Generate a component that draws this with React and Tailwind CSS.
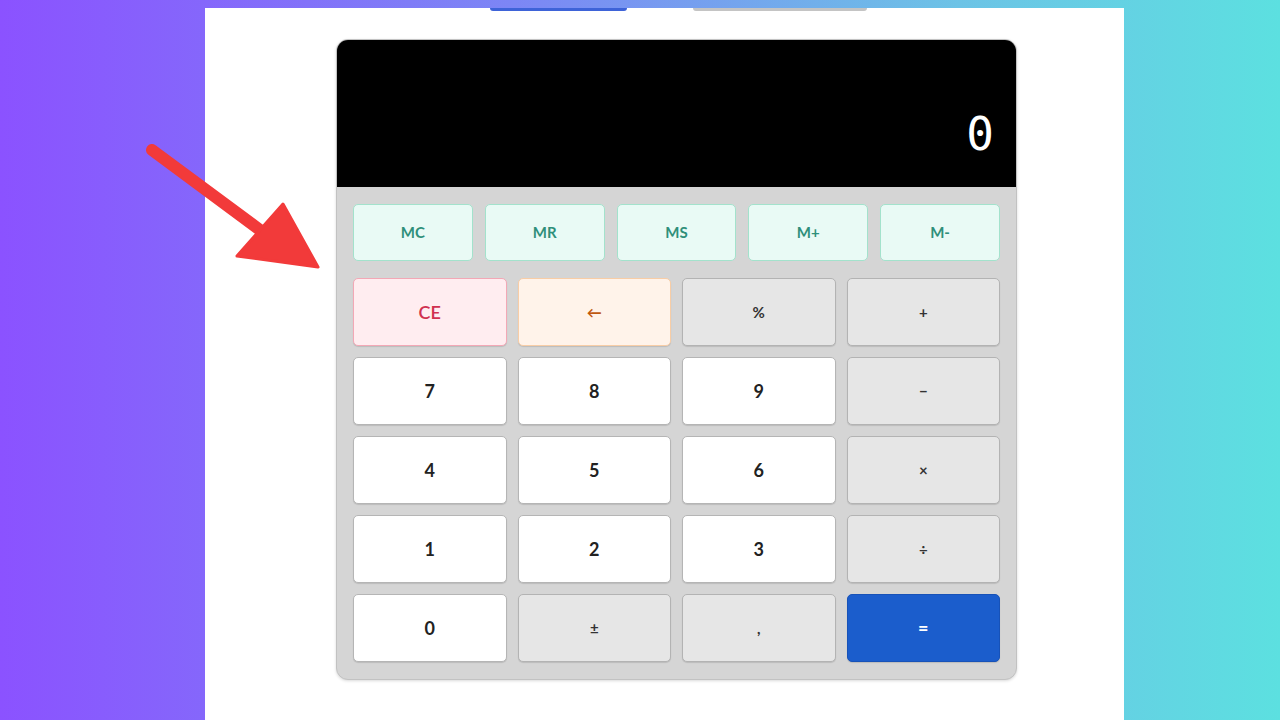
import React from "react";

const font = { fontFamily: '"Lato", "Open Sans", "Liberation Sans", sans-serif' };

function MemBtn({ label }) {
  return (
    <div className="flex h-[57px] flex-1 items-center justify-center rounded-[5px] border border-[#a3e2cc] bg-[#e9faf5] text-[15px] font-bold text-[#2f8f7a]">
      {label}
    </div>
  );
}

function Key({ label, cls }) {
  return (
    <div className={"flex h-[68px] items-center justify-center rounded-[5px] border font-bold shadow-[0_1px_1px_rgba(0,0,0,0.12)] " + cls}>
      {label}
    </div>
  );
}

const num = "bg-white border-[#b5b5b5] text-[#222] text-[18px]";
const op = "bg-[#e6e6e6] border-[#b3b3b3] text-[#333] text-[15px]";

export default function App() {
  const keys = [
    ["CE", "bg-[#ffedf0] border-[#f3a8b6] text-[#d0314f] text-[18px] font-semibold"],
    ["\u2190", "bg-[#fff3ea] border-[#f8cda6] text-[#c05810] text-[15px]"],
    ["%", op],
    ["+", op],
    ["7", num],
    ["8", num],
    ["9", num],
    ["\u2212", op],
    ["4", num],
    ["5", num],
    ["6", num],
    ["\u00d7", op],
    ["1", num],
    ["2", num],
    ["3", num],
    ["\u00f7", op],
    ["0", num],
    ["\u00b1", op],
    [",", op],
    ["=", "bg-[#1b5dcc] border-[#1752b8] text-white text-[18px]"],
  ];
  return (
    <div className="relative h-[720px] w-[1280px] overflow-hidden bg-[linear-gradient(90deg,#8b52ff_0%,#7c86f5_40%,#6cc3e6_75%,#5ce0e0_100%)]" style={font}>
      <div className="ml-[205px] mt-[8px] h-[712px] w-[919px] bg-white">
        <div className="flex h-[3px]">
          <div className="ml-[285px] h-[3px] w-[137px] rounded-b-full bg-[#3e63d8]" />
          <div className="ml-[66px] h-[3px] w-[174px] rounded-b-full bg-[#c4c4c4]" />
        </div>
        <div className="ml-[131px] mt-[28px] w-[681px] overflow-hidden rounded-[12px] border border-[#c2c2c2] bg-[#d5d5d5] shadow-[0_1px_3px_rgba(0,0,0,0.15)]">
          <div className="flex h-[147px] items-end justify-end bg-black pb-[30px] pr-[22px]">
            <span className="text-[46px] leading-none text-white" style={{ fontFamily: '"DejaVu Sans Mono", monospace' }}>0</span>
          </div>
          <div className="px-[16px] pb-[17px] pt-[17px]">
            <div className="flex gap-[12px]">
              {["MC", "MR", "MS", "M+", "M-"].map((m) => (
                <MemBtn key={m} label={m} />
              ))}
            </div>
            <div className="mt-[17px] grid grid-cols-4 gap-x-[11px] gap-y-[11px]">
              {keys.map(([l, c], i) => (
                <Key key={i} label={l} cls={c} />
              ))}
            </div>
          </div>
        </div>
      </div>
      <svg className="absolute left-[140px] top-[138px]" width="190" height="140" viewBox="0 0 190 140">
        <line x1="12" y1="12" x2="120" y2="92" stroke="#f23a3a" strokeWidth="12" strokeLinecap="round" />
        <polygon points="143,66 178,129 97,118" fill="#f23a3a" stroke="#f23a3a" strokeWidth="3" strokeLinejoin="round" />
      </svg>
    </div>
  );
}
